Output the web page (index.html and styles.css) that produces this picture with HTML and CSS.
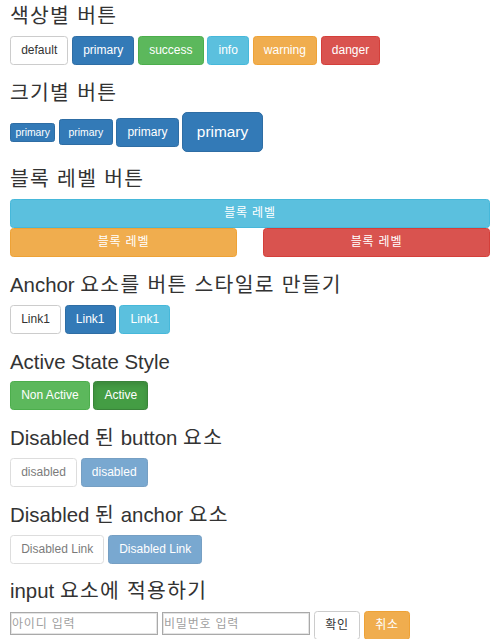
FILE: index.html
```html
<!DOCTYPE html>
<html lang="ko">
<head>
    <meta charset="UTF-8">
    <meta name="viewport" content="width=device-width, initial-scale=1.0">
    <title>Buttons</title>
    <link rel="stylesheet" href="styles.css">
</head>
<body>
    <h3><span class="ko">색상별 버튼</span></h3>
    <div class="btn-row">
        <button class="btn btn-default">default</button>
        <button class="btn btn-primary">primary</button>
        <button class="btn btn-success">success</button>
        <button class="btn btn-info">info</button>
        <button class="btn btn-warning">warning</button>
        <button class="btn btn-danger">danger</button>
    </div>

    <h3><span class="ko">크기별 버튼</span></h3>
    <div class="btn-row">
        <button class="btn btn-primary btn-xs">primary</button>
        <button class="btn btn-primary btn-sm">primary</button>
        <button class="btn btn-primary">primary</button>
        <button class="btn btn-primary btn-lg">primary</button>
    </div>

    <h3><span class="ko">블록 레벨 버튼</span></h3>
    <div class="block-area">
        <button class="btn btn-info btn-block"><span class="ko">블록 레벨</span></button>
        <div class="block-cols">
            <button class="btn btn-warning btn-block"><span class="ko">블록 레벨</span></button>
            <button class="btn btn-danger btn-block"><span class="ko">블록 레벨</span></button>
        </div>
    </div>

    <h3>Anchor <span class="ko">요소를 버튼 스타일로 만들기</span></h3>
    <div class="btn-row">
        <a href="#" class="btn btn-default">Link1</a>
        <a href="#" class="btn btn-primary">Link1</a>
        <a href="#" class="btn btn-info">Link1</a>
    </div>

    <h3>Active State Style</h3>
    <div class="btn-row">
        <button class="btn btn-success">Non Active</button>
        <button class="btn btn-success active">Active</button>
    </div>

    <h3>Disabled <span class="ko">된</span> button <span class="ko">요소</span></h3>
    <div class="btn-row">
        <button class="btn btn-default" disabled>disabled</button>
        <button class="btn btn-primary" disabled>disabled</button>
    </div>

    <h3>Disabled <span class="ko">된</span> anchor <span class="ko">요소</span></h3>
    <div class="btn-row">
        <a href="#" class="btn btn-default disabled">Disabled Link</a>
        <a href="#" class="btn btn-primary disabled">Disabled Link</a>
    </div>

    <h3>input <span class="ko">요소에 적용하기</span></h3>
    <form class="input-row">
        <input type="text" class="text-input" placeholder="아이디 입력">
        <input type="password" class="text-input" placeholder="비밀번호 입력">
        <button type="submit" class="btn btn-default"><span class="ko">확인</span></button>
        <button type="reset" class="btn btn-warning"><span class="ko">취소</span></button>
    </form>
</body>
</html>
```

FILE: styles.css
```css
body {
    font-family: "Liberation Sans", Arial, "Noto Sans CJK KR", sans-serif;
    font-size: 12px;
    line-height: 17px;
    color: #333;
    background-color: #fff;
    margin: 0;
    padding: 5px 10px;
}

h3 {
    font-size: 20.4px;
    font-weight: normal;
    line-height: 1.1;
    margin: 16.6px 0 8.5px;
}

h3:first-child {
    margin-top: 0;
}

/* hangul runs a little wider than the fallback font */
h3 .ko {
    letter-spacing: 1.3px;
}

.btn .ko {
    letter-spacing: 0.8px;
}

.btn-row {
    display: flex;
    align-items: center;
    gap: 3.6px;
}

/* base button */
.btn {
    display: inline-block;
    box-sizing: border-box;
    margin: 0;
    padding: 5px 10.2px;
    font-family: inherit;
    font-size: 12px;
    line-height: 17px;
    text-align: center;
    text-decoration: none;
    white-space: nowrap;
    border: 1px solid transparent;
    border-radius: 3.4px;
    cursor: pointer;
}

.btn-default {
    color: #333;
    background-color: #fff;
    border-color: #ccc;
}

.btn-primary {
    color: #fff;
    background-color: #337ab7;
    border-color: #2e6da4;
}

.btn-success {
    color: #fff;
    background-color: #5cb85c;
    border-color: #4cae4c;
}

.btn-info {
    color: #fff;
    background-color: #5bc0de;
    border-color: #46b8da;
}

.btn-warning {
    color: #fff;
    background-color: #f0ad4e;
    border-color: #eea236;
}

.btn-danger {
    color: #fff;
    background-color: #d9534f;
    border-color: #d43f3a;
}

.btn-success.active {
    background-color: #449d44;
    border-color: #398439;
    box-shadow: inset 0 3px 5px rgba(0, 0, 0, 0.125);
}

/* sizes */
.btn-lg {
    padding: 8.5px 13.6px;
    font-size: 15.4px;
    line-height: 20.4px;
    border-radius: 5.1px;
}

.btn-sm {
    padding: 4.5px 8.5px;
    font-size: 10.4px;
    line-height: 15.3px;
    border-radius: 2.55px;
}

.btn-xs {
    padding: 0.85px 4.4px;
    font-size: 10.4px;
    line-height: 15.3px;
    border-radius: 2.55px;
}

.btn-block {
    display: block;
    width: 100%;
}

.block-cols {
    display: grid;
    grid-template-columns: 1fr 1fr;
    column-gap: 26px;
}

/* disabled states */
.btn[disabled],
.btn.disabled {
    opacity: 0.65;
    cursor: not-allowed;
    box-shadow: none;
}

.btn.disabled {
    pointer-events: none;
}

/* input row */
.input-row {
    display: flex;
    align-items: flex-start;
    gap: 4px;
    margin: 0;
}

.text-input {
    box-sizing: border-box;
    width: 148px;
    height: 23px;
    margin: 1px 0 0;
    padding: 1px 1px;
    font-family: inherit;
    font-size: 12px;
    letter-spacing: 0.8px;
    color: #333;
    border: 1px solid #a9a9a9;
    box-shadow: inset 0 0 0 1px #e4e4e4;
}

.text-input::placeholder {
    color: #a0a0a0;
}
```
